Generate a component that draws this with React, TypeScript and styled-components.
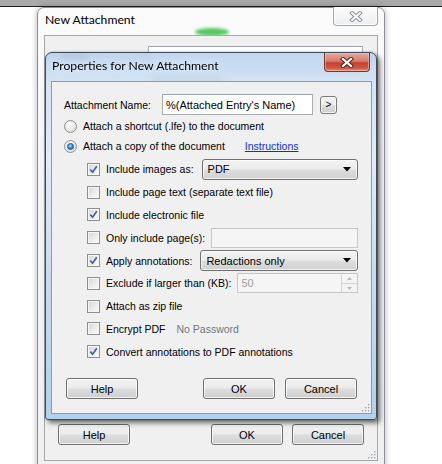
import React from 'react';
import styled, { createGlobalStyle } from 'styled-components';

const GlobalStyle = createGlobalStyle`
  html, body {
    margin: 0;
    padding: 0;
    background: #fff;
  }
  body {
    font-family: "Liberation Sans", Arial, sans-serif;
    font-size: 10.5px;
    color: #000;
  }
`;

const Desktop = styled.div`
  position: relative;
  width: 442px;
  height: 464px;
  overflow: hidden;
  background: #fff;
`;

const TopStrip = styled.div`
  height: 6px;
  background: #a9a9a9;
  border-bottom: 1px solid #1f1f1f;
`;

const WindowBase = styled.div`
  position: absolute;
  box-sizing: border-box;
  display: flex;
  flex-direction: column;
  border-radius: 7px 7px 3px 3px;
`;

const OuterWindow = styled(WindowBase)`
  left: 37px;
  top: 7px;
  width: 348px;
  height: 464px;
  border: 1px solid #8c9096;
  background: linear-gradient(to bottom, #fbfbfb 0%, #f3f4f6 40%, #eef0f2 100%);
  box-shadow: 0 0 6px rgba(0, 0, 0, 0.3);
`;

const InnerDialog = styled(WindowBase)`
  left: 45px;
  top: 52px;
  width: 332px;
  height: 368px;
  border: 1px solid #414c59;
  background: linear-gradient(
    to bottom,
    rgba(178, 206, 236, 0.82) 0%,
    rgba(206, 225, 245, 0.82) 8%,
    rgba(222, 235, 248, 0.9) 30%,
    rgba(196, 219, 242, 0.92) 60%,
    rgba(176, 205, 236, 0.95) 100%
  );
  backdrop-filter: blur(3px);
  box-shadow: 3px 3px 5px rgba(0, 0, 0, 0.55), 0 0 2px rgba(0, 0, 0, 0.3);
`;

const TitleBar = styled.div<{ $height: number; $pad: number }>`
  display: flex;
  justify-content: space-between;
  align-items: flex-start;
  height: ${p => p.$height}px;
  padding-left: ${p => p.$pad}px;
  padding-right: 6px;
  flex: none;
`;

const TitleText = styled.span<{ $top: number }>`
  font-family: Lato, "Open Sans", sans-serif;
  font-size: 12.2px;
  line-height: 16px;
  padding-top: ${p => p.$top}px;
  color: #000;
  text-shadow: 0 0 6px rgba(255, 255, 255, 0.9);
`;

const CloseButton = styled.div<{ $active?: boolean }>`
  box-sizing: border-box;
  width: ${p => (p.$active ? 46 : 45)}px;
  height: 19px;
  margin-top: ${p => (p.$active ? 0 : -1)}px;
  border: 1px solid ${p => (p.$active ? '#6d3a35' : '#a4a7ab')};
  border-top: none;
  border-radius: 0 0 4px 4px;
  display: flex;
  align-items: center;
  justify-content: center;
  background: ${p =>
    p.$active
      ? 'linear-gradient(to bottom, #e6a99f 0%, #d8796c 45%, #c2402e 55%, #cf5a44 85%, #e49a82 100%)'
      : 'linear-gradient(to bottom, #fdfdfd 0%, #f4f5f6 50%, #eceef0 100%)'};
  box-shadow: inset 0 0 0 1px ${p => (p.$active ? 'rgba(255,200,190,0.5)' : 'rgba(255,255,255,0.9)')};
`;

const Glow = styled.div`
  position: absolute;
  left: 157px;
  top: 20px;
  width: 34px;
  height: 8px;
  border-radius: 50%;
  background: #56c964;
  filter: blur(1.5px);
`;

const OuterClient = styled.div`
  flex: 1;
  position: relative;
  margin: 0 6px 9px 6px;
  border: 1px solid #a7a7a7;
  background: #f0f0f0;
  display: flex;
  flex-direction: column;
  justify-content: space-between;
`;

const OuterTop = styled.div`
  padding: 10px 13px 0 15px;
  display: flex;
  flex-direction: column;
  gap: 10px;
`;

const Smudge = styled.div<{ $w: number; $indent?: number }>`
  width: ${p => p.$w}px;
  height: 6px;
  margin-left: ${p => p.$indent ?? 0}px;
  border-radius: 3px;
  background: rgba(60, 60, 60, 0.45);
  filter: blur(1.5px);
`;

const Client = styled.div`
  flex: 1;
  position: relative;
  margin: 0 4px 5px 5px;
  border: 1px solid #8f9aa8;
  background: #f0f0f0;
  padding: 12px 13px 0 12px;
  display: flex;
  flex-direction: column;
`;

const NameRow = styled.div<{ $label: number; $input: number }>`
  display: grid;
  grid-template-columns: ${p => p.$label}px ${p => p.$input}px auto;
  align-items: center;
  height: 21px;
`;

const TextBox = styled.div<{ $disabled?: boolean; $h?: number }>`
  box-sizing: border-box;
  height: ${p => p.$h ?? 21}px;
  border: 1px solid ${p => (p.$disabled ? '#c7c8ca' : '#abadb3')};
  border-top-color: ${p => (p.$disabled ? '#c2c3c5' : '#9ea1a8')};
  background: ${p => (p.$disabled ? '#f5f5f5' : '#fff')};
  color: ${p => (p.$disabled ? '#a0a0a0' : '#000')};
  padding: 0 3px;
  display: flex;
  align-items: center;
  position: relative;
  flex: 1;
  white-space: nowrap;
  overflow: hidden;
  font-size: 11px;
`;

const SmallButton = styled.div`
  box-sizing: border-box;
  width: 17px;
  height: 18px;
  margin-left: 7px;
  border: 1px solid #7a7a7a;
  border-radius: 3px;
  background: linear-gradient(to bottom, #f4f4f4 0%, #ebebeb 48%, #dddddd 52%, #cfcfcf 100%);
  box-shadow: inset 0 0 0 1px rgba(255, 255, 255, 0.75);
  display: flex;
  align-items: center;
  justify-content: center;
  font-size: 10px;
`;

const RadioRow = styled.label<{ $first?: boolean }>`
  display: flex;
  align-items: center;
  gap: 6px;
  height: 20px;
  margin-top: ${p => (p.$first ? 1 : 0)}px;
  white-space: nowrap;
`;

const RadioCircle = styled.span<{ $on?: boolean }>`
  box-sizing: border-box;
  width: 13px;
  height: 13px;
  flex: none;
  border-radius: 50%;
  border: 1px solid #8e8f8f;
  background: radial-gradient(circle at 40% 35%, #fdfdfd 0%, #e6e6e6 60%, #d0d0d0 100%);
  display: flex;
  align-items: center;
  justify-content: center;

  &::after {
    content: '';
    display: ${p => (p.$on ? 'block' : 'none')};
    width: 7px;
    height: 7px;
    border-radius: 50%;
    box-sizing: border-box;
    border: 1px solid #1d4f7d;
    background: radial-gradient(circle at 45% 35%, #b9e6ff 0%, #3d9be0 45%, #0f5a9e 100%);
  }
`;

const Link = styled.span`
  color: #0b2fe0;
  text-decoration: underline;
  margin-left: 14px;
`;

const CheckList = styled.div`
  margin-top: 2px;
  display: flex;
  flex-direction: column;
`;

const CheckRow = styled.div`
  display: flex;
  align-items: center;
  gap: 6px;
  height: 22.8px;
  padding-left: 23px;
  white-space: nowrap;
`;

const BoxFrame = styled.span`
  box-sizing: border-box;
  width: 13px;
  height: 13px;
  flex: none;
  border: 1px solid #8e8f8f;
  background: linear-gradient(135deg, #d2d4d8 0%, #eeeeee 60%, #fbfbfb 100%);
  box-shadow: inset 0 0 0 1px #f6f6f6;
  display: flex;
  align-items: center;
  justify-content: center;
`;

const Muted = styled.span`
  color: #6f7682;
  margin-left: 5px;
`;

const Combo = styled.div`
  box-sizing: border-box;
  flex: 1;
  height: 21px;
  margin-left: 2px;
  border: 1px solid #707070;
  border-radius: 3px;
  background: linear-gradient(to bottom, #f3f3f3 0%, #ebebeb 48%, #dedede 52%, #d0d0d0 100%);
  box-shadow: inset 0 0 0 1px rgba(255, 255, 255, 0.7);
  display: flex;
  align-items: center;
  justify-content: space-between;
  padding: 0 6px 0 5px;
  font-size: 11px;
`;

const Spinner = styled.div`
  position: absolute;
  right: 0;
  top: 0;
  bottom: 0;
  width: 15px;
  display: flex;
  flex-direction: column;
  border-left: 1px solid #d4d4d4;
`;

const SpinHalf = styled.div`
  flex: 1;
  display: flex;
  align-items: center;
  justify-content: center;
  background: #f4f4f4;
  & + & {
    border-top: 1px solid #d4d4d4;
  }
`;

const ButtonRow = styled.div<{ $top?: number; $pad: string; $gap: number }>`
  display: flex;
  align-items: center;
  gap: ${p => p.$gap}px;
  margin-top: ${p => p.$top ?? 0}px;
  padding: ${p => p.$pad};
`;

const Button = styled.div`
  box-sizing: border-box;
  width: 72px;
  height: 21px;
  border: 1px solid #707070;
  border-radius: 3px;
  background: linear-gradient(to bottom, #f2f2f2 0%, #ebebeb 48%, #dddddd 52%, #cfcfcf 100%);
  box-shadow: inset 0 0 0 1px rgba(255, 255, 255, 0.75);
  display: flex;
  align-items: center;
  justify-content: center;
  font-size: 11px;
`;

const Spacer = styled.div`
  flex: 1;
`;

const Grip = styled.svg<{ $right: number; $bottom: number }>`
  position: absolute;
  right: ${p => p.$right}px;
  bottom: ${p => p.$bottom}px;
`;

const CloseGlyph: React.FC<{ active?: boolean }> = ({ active }) => (
  <svg width="14" height="11" viewBox="0 0 14 11">
    <path
      d="M3 2 L11 9 M11 2 L3 9"
      stroke={active ? '#4a2420' : '#8a8d92'}
      strokeWidth={active ? 4.2 : 4}
      strokeLinecap="square"
    />
    <path
      d="M3 2 L11 9 M11 2 L3 9"
      stroke={active ? '#ffffff' : '#f4f5f6'}
      strokeWidth={active ? 2.3 : 2.2}
      strokeLinecap="square"
    />
  </svg>
);

const Arrow = () => (
  <svg width="8" height="5" viewBox="0 0 8 5">
    <path d="M0 0 H8 L4 4.5 Z" fill="#000" />
  </svg>
);

const GripDots = ({ right, bottom }: { right: number; bottom: number }) => (
  <Grip width="9" height="9" viewBox="0 0 9 9" $right={right} $bottom={bottom}>
    {[
      [7, 1],
      [4, 4],
      [7, 4],
      [1, 7],
      [4, 7],
      [7, 7],
    ].map(([x, y]) => (
      <g key={`${x}-${y}`}>
        <rect x={x + 0.5} y={y + 0.5} width="1.5" height="1.5" fill="#fff" />
        <rect x={x} y={y} width="1.5" height="1.5" fill="#a6a6a6" />
      </g>
    ))}
  </Grip>
);

const Checkbox = ({ checked }: { checked?: boolean }) => (
  <BoxFrame>
    {checked && (
      <svg width="9" height="9" viewBox="0 0 9 9">
        <path d="M1.3 4.6 L3.6 7.2 L7.8 1.2" stroke="#4b5f96" strokeWidth="1.7" fill="none" />
      </svg>
    )}
  </BoxFrame>
);

const rows: { label: string; checked?: boolean; extra?: React.ReactNode }[] = [
  {
    label: 'Include images as:',
    checked: true,
    extra: (
      <Combo>
        <span>PDF</span>
        <Arrow />
      </Combo>
    ),
  },
  { label: 'Include page text (separate text file)' },
  { label: 'Include electronic file', checked: true },
  { label: 'Only include page(s):', extra: <TextBox $disabled $h={20} /> },
  {
    label: 'Apply annotations:',
    checked: true,
    extra: (
      <Combo>
        <span>Redactions only</span>
        <Arrow />
      </Combo>
    ),
  },
  {
    label: 'Exclude if larger than (KB):',
    extra: (
      <TextBox $disabled $h={20}>
        50
        <Spinner>
          <SpinHalf>
            <svg width="5" height="3" viewBox="0 0 5 3">
              <path d="M0 3 L2.5 0 L5 3 Z" fill="#b8b8b8" />
            </svg>
          </SpinHalf>
          <SpinHalf>
            <svg width="5" height="3" viewBox="0 0 5 3">
              <path d="M0 0 L2.5 3 L5 0 Z" fill="#b8b8b8" />
            </svg>
          </SpinHalf>
        </Spinner>
      </TextBox>
    ),
  },
  { label: 'Attach as zip file' },
  { label: 'Encrypt PDF', extra: <Muted>No Password</Muted> },
  { label: 'Convert annotations to PDF annotations', checked: true },
];

const App: React.FC = () => {
  return (
    <Desktop>
      <GlobalStyle />
      <TopStrip />

      <OuterWindow>
        <TitleBar $height={27} $pad={7}>
          <TitleText $top={4}>New Attachment</TitleText>
          <CloseButton>
            <CloseGlyph />
          </CloseButton>
        </TitleBar>
        <Glow />
        <OuterClient>
          <OuterTop>
            <NameRow $label={88} $input={215}>
              <Smudge $w={30} />
              <TextBox />
            </NameRow>
            <Smudge $w={70} $indent={92} />
          </OuterTop>
          <ButtonRow $pad="0 13px 15px 13px" $gap={9}>
            <Button>Help</Button>
            <Spacer />
            <Button>OK</Button>
            <Button>Cancel</Button>
          </ButtonRow>
          <GripDots right={1} bottom={1} />
        </OuterClient>
      </OuterWindow>

      <InnerDialog>
        <TitleBar $height={28} $pad={6}>
          <TitleText $top={5}>Properties for New Attachment</TitleText>
          <CloseButton $active>
            <CloseGlyph active />
          </CloseButton>
        </TitleBar>
        <Client>
          <NameRow $label={98} $input={151}>
            <span>Attachment Name:</span>
            <TextBox>%(Attached Entry's Name)</TextBox>
            <SmallButton>&gt;</SmallButton>
          </NameRow>
          <RadioRow $first>
            <RadioCircle />
            <span>Attach a shortcut (.lfe) to the document</span>
          </RadioRow>
          <RadioRow>
            <RadioCircle $on />
            <span>Attach a copy of the document</span>
            <Link>Instructions</Link>
          </RadioRow>
          <CheckList>
            {rows.map(r => (
              <CheckRow key={r.label}>
                <Checkbox checked={r.checked} />
                <span>{r.label}</span>
                {r.extra}
              </CheckRow>
            ))}
          </CheckList>
          <ButtonRow $top={15} $pad="0 1px 0 2px" $gap={10}>
            <Button>Help</Button>
            <Spacer />
            <Button>OK</Button>
            <Button>Cancel</Button>
          </ButtonRow>
          <GripDots right={1} bottom={1} />
        </Client>
      </InnerDialog>
    </Desktop>
  );
};

export default App;
